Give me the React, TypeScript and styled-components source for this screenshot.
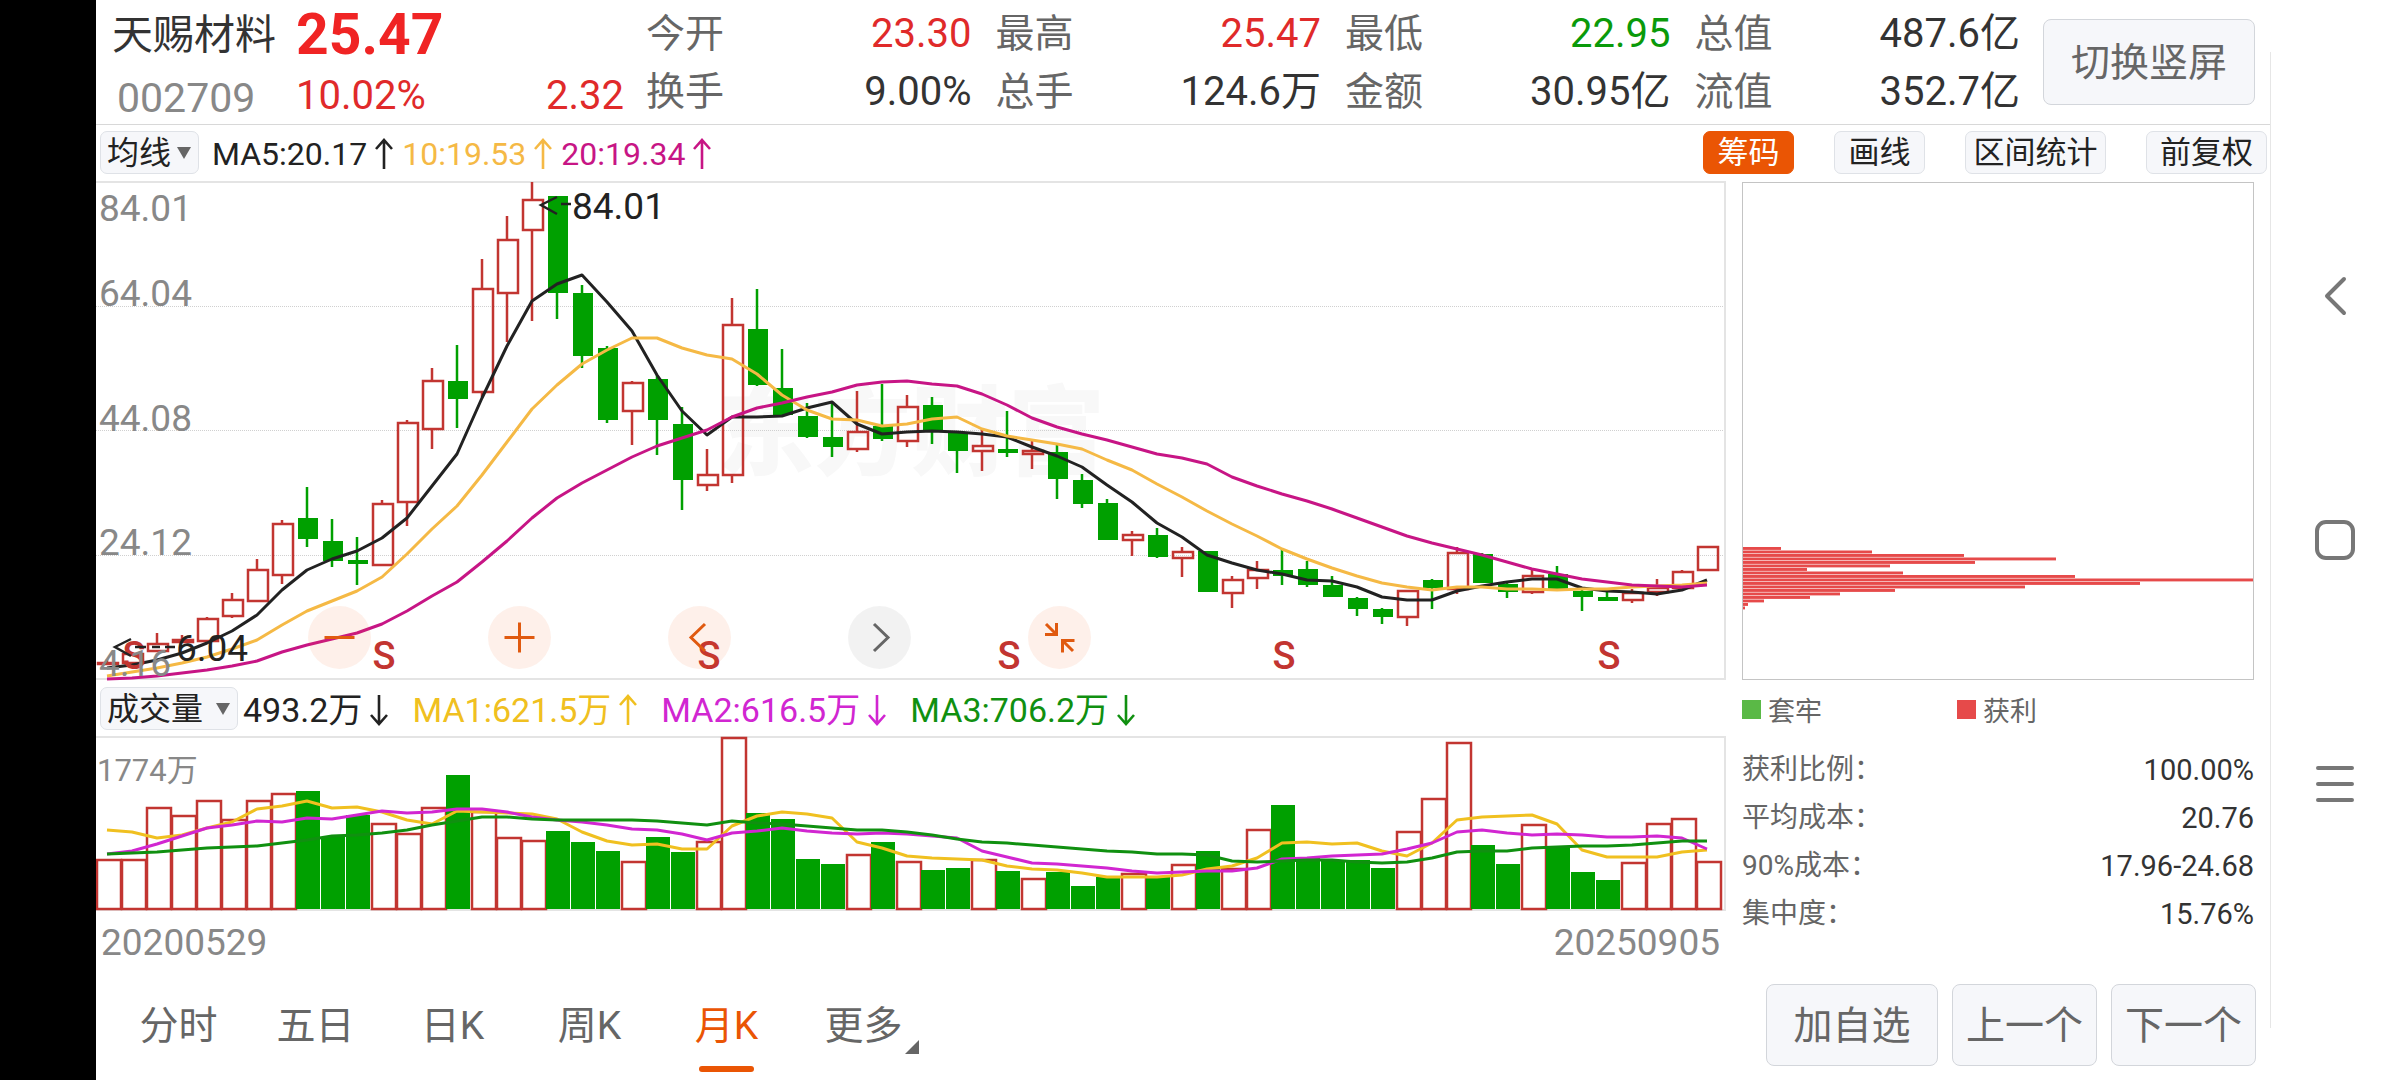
import React from 'react';
import styled, { createGlobalStyle, css } from 'styled-components';

const color = {
  ink: '#222222',
  text: '#333333',
  muted: '#666666',
  axis: '#888888',
  up: '#e02a2a',
  price: '#f02424',
  down: '#0a9a0a',
  candleUp: '#c23531',
  candleDown: '#00a000',
  accent: '#ea5504',
  ma10: '#f5b945',
  ma20: '#c71585',
  volA: '#f0c020',
  volB: '#d126d1',
  volC: '#109010',
  line: '#d8d8d8',
  frame: '#e4e4e4',
  chip: '#e64a4a',
};

const sans = '"Roboto", "Noto Sans CJK SC", sans-serif';

const GlobalStyle = createGlobalStyle`
  *, *::before, *::after { box-sizing: border-box; }
  body { margin: 0; background: #ffffff; font-family: ${sans}; }
  button, select { font-family: inherit; margin: 0; cursor: pointer; }
`;

/* ---------- page frame ---------- */

const Page = styled.div`
  display: flex;
  min-height: 100vh;
  background: #ffffff;
  color: ${color.text};
`;

const CutoutStrip = styled.div`
  flex: none;
  width: 96px;
  background: #000000;
`;

const Main = styled.main`
  flex: 1;
  min-width: 0;
  display: flex;
  flex-direction: column;
`;

const SystemNav = styled.nav`
  flex: none;
  width: 130px;
  margin: 52px 0;
  padding-right: 2px;
  border-left: 1px solid #e6e6e6;
  display: flex;
  flex-direction: column;
  align-items: center;
  justify-content: center;
  gap: 196px;
`;

const NavButton = styled.button`
  width: 48px;
  height: 48px;
  padding: 0;
  border: 0;
  background: none;
  svg { display: block; }
`;

/* ---------- header ---------- */

const Header = styled.header`
  display: flex;
  align-items: flex-start;
  height: 125px;
  padding: 5px 15px 0 16px;
  border-bottom: 1px solid ${color.line};
`;

const Identity = styled.div`
  flex: none;
  width: 184px;
`;

const StockName = styled.h1`
  margin: 0;
  font-size: 41px;
  font-weight: 400;
  line-height: 60px;
  white-space: nowrap;
`;

const StockCode = styled.div`
  padding-left: 5px;
  font-size: 41px;
  line-height: 66px;
  color: ${color.axis};
`;

const Quote = styled.div`
  flex: none;
  width: 328px;
  color: ${color.up};
`;

const Price = styled.div`
  font-size: 57px;
  font-weight: 700;
  line-height: 60px;
  color: ${color.price};
`;

const Change = styled.div`
  display: flex;
  justify-content: space-between;
  font-size: 40px;
  line-height: 62px;
`;

const Metrics = styled.dl`
  flex: 1;
  min-width: 0;
  margin: 0 23px 0 22px;
  display: grid;
  grid-template-columns: repeat(4, 1fr);
  grid-auto-rows: 58px;
  column-gap: 24px;
`;

const Metric = styled.div`
  display: flex;
  align-items: center;
  justify-content: space-between;
  white-space: nowrap;
  dt { font-size: 39px; line-height: 58px; color: ${color.muted}; }
`;

const MetricValue = styled.dd<{ $tone?: string }>`
  margin: 0;
  font-size: 40px;
  line-height: 58px;
  color: ${(p) => p.$tone ?? color.text};
`;

const PanelButton = styled.button<{ $width: number; $tall?: boolean }>`
  flex: none;
  width: ${(p) => p.$width}px;
  height: ${(p) => (p.$tall ? 86 : 82)}px;
  padding: 2px 0 0;
  border: 1px solid #d3d6db;
  border-radius: 8px;
  background: #f6f7fa;
  color: ${color.muted};
  font-size: 39px;
  line-height: 56px;
  white-space: nowrap;
`;

const RotateSlot = styled.div`
  padding-top: 14px;
`;

/* ---------- tool rows ---------- */

const ToolRow = styled.div<{ $height: number }>`
  display: flex;
  align-items: center;
  height: ${(p) => p.$height}px;
  padding: 0 3px 0 4px;
`;

const SelectBox = styled.div<{ $width: number }>`
  position: relative;
  flex: none;
  width: ${(p) => p.$width}px;
  svg {
    position: absolute;
    right: 8px;
    top: 50%;
    margin-top: -6px;
    pointer-events: none;
  }
`;

const Select = styled.select`
  appearance: none;
  display: block;
  width: 100%;
  height: 43px;
  padding: 0 0 0 6px;
  border: 1px solid #dfe2e7;
  border-radius: 7px;
  background: #f6f7fa;
  color: ${color.ink};
  font-size: 32px;
  line-height: 40px;
`;

const Readouts = styled.div<{ $size: number; $gap: number; $start: number }>`
  display: flex;
  align-items: center;
  gap: ${(p) => p.$gap}px;
  padding: 2px 0 0 ${(p) => p.$start}px;
  font-size: ${(p) => p.$size}px;
  line-height: 44px;
  white-space: nowrap;
`;

const Readout = styled.span<{ $color: string }>`
  display: inline-flex;
  align-items: center;
  gap: 8px;
  color: ${(p) => p.$color};
  svg { display: block; }
`;

const ToolButtons = styled.div`
  margin-left: auto;
  display: flex;
  gap: 40px;
`;

const ToolButton = styled.button<{ $active?: boolean; $width: number }>`
  width: ${(p) => p.$width}px;
  height: 43px;
  padding: 1px 0 0;
  border: 1px solid #dfe2e7;
  border-radius: 7px;
  background: #f6f7fa;
  color: ${color.ink};
  font-size: 31px;
  line-height: 40px;
  white-space: nowrap;
  ${(p) =>
    p.$active &&
    css`
      border-color: ${color.accent};
      background: ${color.accent};
      color: #ffffff;
    `}
`;

/* ---------- charts ---------- */

const Board = styled.div`
  display: flex;
  align-items: flex-start;
  gap: 14px;
  padding-right: 16px;
`;

const ChartColumn = styled.section`
  flex: 1;
  min-width: 0;
`;

const ChartFrame = styled.div`
  position: relative;
`;

const Plot = styled.svg`
  display: block;
  width: 100%;
  height: auto;
  font-family: ${sans};
`;

const ChartControls = styled.div`
  position: absolute;
  left: 13%;
  right: 0;
  bottom: 13px;
  display: flex;
  gap: 117px;
`;

const RoundButton = styled.button<{ $idle?: boolean }>`
  width: 63px;
  height: 63px;
  padding: 0;
  border: 0;
  border-radius: 50%;
  background: ${(p) => (p.$idle ? 'rgba(0, 0, 0, 0.05)' : 'rgba(240, 90, 20, 0.09)')};
  color: ${(p) => (p.$idle ? '#666666' : '#e05a10')};
  svg { display: block; }
`;

const DateRow = styled.div`
  display: flex;
  justify-content: space-between;
  padding: 1px 8px 0 5px;
  font-size: 37px;
  line-height: 59px;
  color: ${color.axis};
`;

/* ---------- chip distribution ---------- */

const ChipColumn = styled.aside`
  flex: none;
  width: 512px;
  font-size: 27px;
`;

const Legend = styled.div`
  display: grid;
  grid-template-columns: 215px 1fr;
  height: 54px;
  color: ${color.muted};
`;

const LegendItem = styled.span<{ $color: string }>`
  display: flex;
  align-items: center;
  gap: 7px;
  &::before {
    content: '';
    width: 19px;
    height: 19px;
    background: ${(p) => p.$color};
  }
`;

const Stats = styled.dl`
  margin: 10px 0 0;
`;

const Stat = styled.div`
  display: flex;
  justify-content: space-between;
  line-height: 48px;
  dt { font-size: 28px; color: ${color.muted}; }
  dd { margin: 0; font-size: 29px; color: ${color.text}; }
`;

/* ---------- footer ---------- */

const Footer = styled.footer`
  display: flex;
  align-items: flex-start;
  justify-content: space-between;
  padding: 12px 14px 0 14px;
`;

const Tabs = styled.nav`
  display: flex;
`;

const Tab = styled.button<{ $active?: boolean }>`
  display: flex;
  flex-direction: column;
  align-items: center;
  justify-content: space-between;
  width: 137px;
  height: 88px;
  padding: 14px 0 0;
  border: 0;
  background: none;
  color: ${(p) => (p.$active ? color.accent : color.muted)};
  font-size: 39px;
  line-height: 56px;
  white-space: nowrap;
  &::after {
    content: '';
    width: 55px;
    height: 6px;
    border-radius: 3px;
    background: ${(p) => (p.$active ? color.accent : 'transparent')};
  }
`;

const MoreLabel = styled.span`
  position: relative;
  svg { position: absolute; left: 100%; bottom: 0; margin-left: 2px; }
`;

const Pager = styled.div`
  display: flex;
  gap: 14px;
`;

/* ---------- data ---------- */

type Candle = [up: 0 | 1, high: number, top: number, bottom: number, low: number];

const candles: Candle[] = [
  [1, 477, 480, 483, 483], [1, 470, 471, 482, 482], [1, 451, 461, 470, 470], [1, 453, 457, 461, 461],
  [1, 435, 436, 460, 460], [1, 411, 417, 435, 436], [1, 377, 387, 420, 420], [1, 338, 341, 394, 402],
  [0, 305, 336, 357, 365], [0, 337, 359, 379, 385], [0, 355, 378, 382, 403], [1, 318, 321, 384, 384],
  [1, 238, 240, 321, 344], [1, 186, 198, 248, 267], [0, 163, 199, 217, 246], [1, 77, 106, 211, 215],
  [1, 34, 57, 112, 160], [1, 0, 17, 49, 139], [0, 14, 14, 111, 137], [0, 103, 111, 174, 186],
  [0, 164, 166, 238, 241], [1, 199, 200, 230, 263], [0, 193, 197, 238, 273], [0, 225, 242, 298, 328],
  [1, 267, 292, 304, 309], [1, 116, 142, 294, 301], [0, 107, 147, 203, 204], [0, 167, 206, 233, 233],
  [0, 221, 234, 255, 256], [0, 220, 255, 265, 275], [1, 209, 249, 268, 270], [0, 202, 244, 257, 259],
  [1, 213, 224, 260, 265], [0, 215, 223, 249, 262], [0, 250, 251, 269, 291], [1, 247, 263, 270, 289],
  [0, 229, 267, 271, 275], [1, 259, 268, 273, 287], [0, 263, 270, 297, 317], [0, 292, 298, 322, 326],
  [0, 317, 321, 358, 358], [1, 349, 352, 359, 374], [0, 346, 353, 375, 376], [1, 365, 369, 377, 395],
  [0, 369, 369, 410, 410], [1, 394, 397, 412, 426], [1, 379, 387, 397, 407], [0, 366, 388, 394, 403],
  [0, 379, 387, 403, 405], [0, 394, 403, 415, 415], [0, 415, 416, 427, 434], [0, 426, 427, 435, 442],
  [1, 408, 408, 436, 444], [0, 397, 398, 406, 427], [1, 365, 370, 408, 412], [0, 371, 372, 401, 401],
  [0, 401, 402, 410, 416], [1, 386, 393, 411, 412], [0, 384, 392, 407, 409], [0, 405, 409, 415, 429],
  [0, 409, 415, 419, 419], [1, 407, 410, 419, 421], [1, 397, 405, 411, 414], [1, 388, 389, 407, 407],
  [1, 364, 364, 389, 389],
];

const ma5 = [
  486, 483, 478, 471, 461, 449, 433, 408, 388, 377, 369, 356, 336, 304, 272, 216, 164, 119, 102, 93, 120, 149,
  193, 229, 253, 235, 235, 234, 226, 220, 242, 252, 250, 249, 250, 252, 255, 265, 274, 285, 303, 320, 341, 355,
  373, 381, 388, 392, 398, 399, 405, 415, 418, 418, 409, 404, 400, 397, 397, 406, 409, 410, 412, 408, 398,
];

const ma10 = [
  494, 490, 486, 481, 475, 467, 458, 443, 429, 419, 409, 395, 372, 347, 324, 293, 260, 227, 203, 182, 168, 156,
  156, 166, 173, 177, 192, 213, 228, 237, 238, 244, 242, 237, 235, 247, 254, 258, 262, 267, 278, 288, 302, 315,
  329, 342, 354, 367, 377, 386, 394, 401, 405, 408, 405, 405, 407, 407, 408, 407, 407, 405, 404, 403, 401,
];

const ma20 = [
  497, 496, 494, 491, 488, 484, 479, 470, 463, 457, 451, 442, 429, 414, 400, 380, 359, 336, 316, 301, 288, 275,
  264, 256, 248, 235, 226, 221, 215, 210, 203, 200, 199, 202, 204, 212, 223, 236, 245, 252, 258, 265, 272, 276,
  282, 295, 304, 312, 319, 327, 336, 345, 354, 361, 367, 373, 380, 387, 392, 397, 400, 403, 404, 405, 403,
];

const volumeTops = [
  122, 122, 70, 78, 63, 82, 63, 56, 54, 100, 78, 86, 96, 70, 38, 74, 100, 103, 94, 105, 114, 124, 100, 115, 104,
  0, 76, 82, 122, 127, 117, 105, 124, 133, 131, 122, 134, 141, 135, 149, 140, 136, 140, 127, 114, 131, 92, 68,
  121, 123, 123, 131, 94, 61, 5, 108, 127, 87, 109, 135, 143, 125, 86, 81, 124,
];

/* Indexes of the months whose volume counts as buying. */
const buyMonths = new Set([
  0, 1, 2, 3, 4, 5, 6, 7, 11, 12, 13, 15, 16, 17, 21, 24, 25, 30, 32, 35, 37, 41, 43, 45, 46, 52, 53, 54, 57,
  61, 62, 63, 64,
]);

const volMa1 = [
  93, 95, 101, 98, 91, 85, 72, 69, 64, 71, 70, 75, 83, 87, 74, 75, 76, 77, 82, 95, 104, 108, 107, 112, 112, 89,
  79, 75, 77, 81, 105, 111, 119, 121, 122, 123, 129, 132, 133, 136, 140, 140, 140, 138, 132, 129, 121, 106, 105,
  107, 106, 114, 119, 106, 83, 80, 79, 78, 87, 113, 120, 120, 120, 115, 113,
];

const volMa2 = [
  117, 114, 107, 99, 91, 88, 84, 85, 81, 82, 78, 74, 76, 75, 72, 72, 75, 80, 83, 85, 88, 92, 93, 97, 103, 96,
  94, 91, 94, 96, 97, 96, 97, 99, 101, 114, 120, 126, 127, 129, 131, 134, 136, 135, 134, 134, 131, 122, 121,
  119, 118, 117, 112, 106, 95, 93, 96, 98, 97, 98, 100, 100, 99, 101, 112,
];

const volMa3 = [
  117, 116, 115, 113, 111, 110, 109, 106, 103, 99, 98, 96, 93, 88, 84, 80, 80, 82, 83, 83, 83, 83, 84, 86, 88,
  84, 86, 87, 89, 91, 93, 93, 95, 98, 102, 105, 106, 108, 110, 112, 114, 115, 117, 117, 118, 124, 125, 124, 123,
  123, 125, 126, 125, 121, 115, 114, 114, 111, 110, 109, 109, 108, 106, 104, 104,
];

const chipWidths = [38, 129, 221, 313, 232, 147, 64, 160, 332, 510, 397, 282, 152, 97, 67, 21, 5, 2];

const metrics: [string, string, string?][] = [
  ['今开', '23.30', color.up],
  ['最高', '25.47', color.up],
  ['最低', '22.95', color.down],
  ['总值', '487.6亿'],
  ['换手', '9.00%'],
  ['总手', '124.6万'],
  ['金额', '30.95亿'],
  ['流值', '352.7亿'],
];

const stats = [
  ['获利比例：', '100.00%'],
  ['平均成本：', '20.76'],
  ['90%成本：', '17.96-24.68'],
  ['集中度：', '15.76%'],
];

const STEP = 25;
const centerOf = (i: number) => 11 + i * STEP;
const toPoints = (ys: number[]) => ys.map((y, i) => `${centerOf(i)},${y}`).join(' ');

/* ---------- pieces ---------- */

const Caret = () => (
  <svg width="14" height="12" viewBox="0 0 14 12" aria-hidden="true">
    <path d="M0 0h14L7 12z" fill="#666666" />
  </svg>
);

const Trend = ({ down }: { down?: boolean }) => (
  <svg width="18" height="32" viewBox="0 0 18 32" fill="none" stroke="currentColor" strokeWidth="2.6" role="img" aria-label={down ? '下降' : '上升'}>
    <path d={down ? 'M9 1V30M1 21L9 30L17 21' : 'M9 31V2M1 11L9 2L17 11'} />
  </svg>
);

const Line = ({ ys, stroke }: { ys: number[]; stroke: string }) => (
  <polyline points={toPoints(ys)} fill="none" stroke={stroke} strokeWidth="3" strokeLinejoin="round" />
);

function CandleMark({ data, x }: { data: Candle; x: number }) {
  const [up, high, top, bottom, low] = data;
  if (!up) {
    return (
      <g fill={color.candleDown}>
        <rect x={x - 1.25} y={high} width="2.5" height={Math.max(low - high, 1)} />
        <rect x={x - 9} y={top} width="20" height={bottom - top} />
      </g>
    );
  }
  return (
    <g stroke={color.candleUp} strokeWidth="2.5" fill="none">
      <path d={`M${x} ${high}V${top}M${x} ${bottom}V${low}`} />
      <rect x={x - 9} y={top + 1} width="20" height={Math.max(bottom - top - 2, 1)} />
    </g>
  );
}

function PriceChart() {
  return (
    <Plot viewBox="0 -2 1632 502" role="img" aria-label="月K线图">
      <text x="621" y="285" fontSize="97" fontWeight="900" fill="#f8f8f8">东方财富</text>
      <g stroke="#d0d0d0" strokeDasharray="1 1">
        <path d="M0 124.5H1629M0 248.5H1629M0 373.5H1629" />
      </g>
      <path d="M0 0H1629V497H0" fill="none" stroke={color.frame} strokeWidth="2" />
      {candles.map((c, i) => (
        <CandleMark key={i} data={c} x={centerOf(i)} />
      ))}
      <Line ys={ma5} stroke={color.ink} />
      <Line ys={ma10} stroke={color.ma10} />
      <Line ys={ma20} stroke={color.ma20} />
      <g fill={color.candleUp} fontSize="38" fontWeight="500" textAnchor="middle">
        {[38, 288, 613, 913, 1188, 1513].map((x) => (
          <text key={x} x={x} y="487">S</text>
        ))}
      </g>
      <g fill={color.axis} fontSize="37">
        <text x="3" y="39">84.01</text>
        <text x="3" y="124">64.04</text>
        <text x="3" y="249">44.08</text>
        <text x="3" y="373">24.12</text>
        <text x="3" y="494">4.16</text>
      </g>
      <g stroke={color.ink} strokeWidth="2.5" fill="none">
        <path d="M461 15L445 23L461 32M465 22H475" />
        <path d="M35 457L19 465L35 474M39 465H50M56 465H64M69 465H79" />
      </g>
      <g fill={color.ink} fontSize="37">
        <text x="476" y="37">84.01</text>
        <text x="80" y="479">6.04</text>
      </g>
    </Plot>
  );
}

function VolumeChart() {
  return (
    <Plot viewBox="0 -2 1632 177" role="img" aria-label="成交量图">
      <path d="M0 0H1629V173H0" fill="none" stroke={color.frame} strokeWidth="2" />
      {volumeTops.map((top, i) =>
        buyMonths.has(i) ? (
          <rect key={i} x={i * STEP + 1} y={top + 1} width="24" height={171 - top} fill="none" stroke={color.candleUp} strokeWidth="2.5" />
        ) : (
          <rect key={i} x={i * STEP} y={top} width="24" height={172 - top} fill={color.candleDown} />
        ),
      )}
      <Line ys={volMa1} stroke={color.volA} />
      <Line ys={volMa2} stroke={color.volB} />
      <Line ys={volMa3} stroke={color.volC} />
      <text x="1" y="44" fontSize="31" fill={color.axis}>1774万</text>
    </Plot>
  );
}

function ChipChart() {
  return (
    <Plot viewBox="0 -2 512 502" role="img" aria-label="筹码分布">
      {chipWidths.map((w, i) => (
        <rect key={i} x="1" y={365 + i * 3.5} width={w} height="2.9" fill={color.chip} />
      ))}
      <rect x="0.5" y="0.5" width="511" height="497" fill="none" stroke="#c4c4c4" />
    </Plot>
  );
}

const glyph = { width: 63, height: 63, viewBox: '0 0 63 63', fill: 'none', stroke: 'currentColor', strokeWidth: 3 };

export default function App() {
  return (
    <>
      <GlobalStyle />
      <Page>
        <CutoutStrip />
        <Main>
          <Header>
            <Identity>
              <StockName>天赐材料</StockName>
              <StockCode>002709</StockCode>
            </Identity>
            <Quote>
              <Price>25.47</Price>
              <Change>
                <span>10.02%</span>
                <span>2.32</span>
              </Change>
            </Quote>
            <Metrics>
              {metrics.map(([label, value, tone]) => (
                <Metric key={label}>
                  <dt>{label}</dt>
                  <MetricValue $tone={tone}>{value}</MetricValue>
                </Metric>
              ))}
            </Metrics>
            <RotateSlot>
              <PanelButton $width={212} $tall>切换竖屏</PanelButton>
            </RotateSlot>
          </Header>

          <ToolRow $height={55}>
            <SelectBox $width={99}>
              <Select aria-label="主图指标">
                <option>均线</option>
              </Select>
              <Caret />
            </SelectBox>
            <Readouts $size={32} $gap={9} $start={13}>
              <Readout $color={color.ink}>MA5:20.17<Trend /></Readout>
              <Readout $color={color.ma10}>10:19.53<Trend /></Readout>
              <Readout $color={color.ma20}>20:19.34<Trend /></Readout>
            </Readouts>
            <ToolButtons>
              <ToolButton $active $width={91}>筹码</ToolButton>
              <ToolButton $width={91}>画线</ToolButton>
              <ToolButton $width={141}>区间统计</ToolButton>
              <ToolButton $width={121}>前复权</ToolButton>
            </ToolButtons>
          </ToolRow>

          <Board>
            <ChartColumn>
              <ChartFrame>
                <PriceChart />
                <ChartControls>
                  <RoundButton aria-label="缩小">
                    <svg {...glyph}><path d="M16.5 31.5H46.5" /></svg>
                  </RoundButton>
                  <RoundButton aria-label="放大">
                    <svg {...glyph}><path d="M16.5 31.5H46.5M31.5 16.5V46.5" /></svg>
                  </RoundButton>
                  <RoundButton aria-label="向左">
                    <svg {...glyph}><path d="M37 18L23 31.5L37 45" /></svg>
                  </RoundButton>
                  <RoundButton $idle aria-label="向右">
                    <svg {...glyph}><path d="M26 18L40 31.5L26 45" /></svg>
                  </RoundButton>
                  <RoundButton aria-label="收起">
                    <svg {...glyph}>
                      <path d="M18 18L29 29M28.5 17V28.5H17M45 45L35 35M34.5 46.5V34.5H46.5" />
                    </svg>
                  </RoundButton>
                </ChartControls>
              </ChartFrame>
              <ToolRow $height={53}>
                <SelectBox $width={138}>
                  <Select aria-label="副图指标">
                    <option>成交量</option>
                  </Select>
                  <Caret />
                </SelectBox>
                <Readouts $size={34} $gap={24} $start={5}>
                  <Readout $color={color.ink}>493.2万<Trend down /></Readout>
                  <Readout $color={color.volA}>MA1:621.5万<Trend /></Readout>
                  <Readout $color={color.volB}>MA2:616.5万<Trend down /></Readout>
                  <Readout $color={color.volC}>MA3:706.2万<Trend down /></Readout>
                </Readouts>
              </ToolRow>
              <VolumeChart />
              <DateRow>
                <span>20200529</span>
                <span>20250905</span>
              </DateRow>
            </ChartColumn>

            <ChipColumn>
              <ChipChart />
              <Legend>
                <LegendItem $color="#5ab946">套牢</LegendItem>
                <LegendItem $color={color.chip}>获利</LegendItem>
              </Legend>
              <Stats>
                {stats.map(([label, value]) => (
                  <Stat key={label}>
                    <dt>{label}</dt>
                    <dd>{value}</dd>
                  </Stat>
                ))}
              </Stats>
            </ChipColumn>
          </Board>

          <Footer>
            <Tabs>
              <Tab>分时</Tab>
              <Tab>五日</Tab>
              <Tab>日K</Tab>
              <Tab>周K</Tab>
              <Tab $active>月K</Tab>
              <Tab>
                <MoreLabel>
                  更多
                  <svg width="14" height="14" viewBox="0 0 14 14" aria-hidden="true">
                    <path d="M14 0V14H0z" fill="#666666" />
                  </svg>
                </MoreLabel>
              </Tab>
            </Tabs>
            <Pager>
              <PanelButton $width={172}>加自选</PanelButton>
              <PanelButton $width={145}>上一个</PanelButton>
              <PanelButton $width={145}>下一个</PanelButton>
            </Pager>
          </Footer>
        </Main>

        <SystemNav aria-label="系统导航">
          <NavButton aria-label="返回">
            <svg width="48" height="48" viewBox="0 0 48 48" fill="none" stroke="#777777" strokeWidth="4" strokeLinecap="round" strokeLinejoin="round">
              <path d="M33 7L16 24L33 41" />
            </svg>
          </NavButton>
          <NavButton aria-label="主屏幕">
            <svg width="48" height="48" viewBox="0 0 48 48" fill="none" stroke="#777777" strokeWidth="4">
              <rect x="6" y="6" width="36" height="36" rx="9" />
            </svg>
          </NavButton>
          <NavButton aria-label="最近任务">
            <svg width="48" height="48" viewBox="0 0 48 48" fill="none" stroke="#777777" strokeWidth="4" strokeLinecap="round">
              <path d="M7 8H41M7 24H41M7 40H41" />
            </svg>
          </NavButton>
        </SystemNav>
      </Page>
    </>
  );
}
